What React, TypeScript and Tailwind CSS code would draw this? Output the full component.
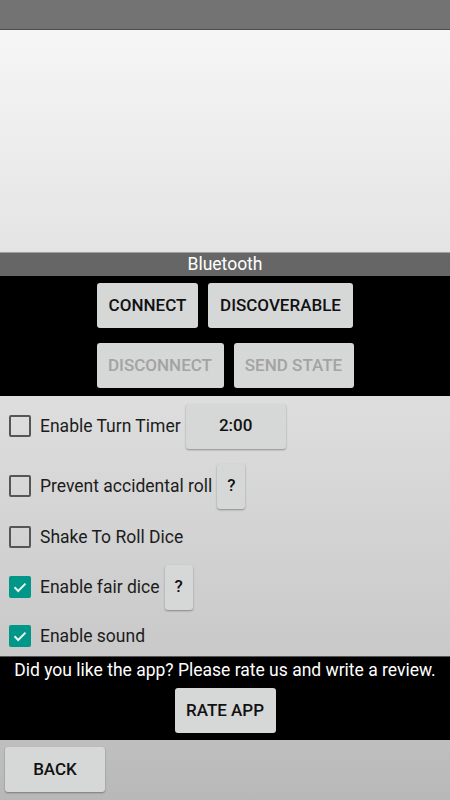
import React from "react";

type BtnProps = {
  label: string;
  w: string;
  disabled?: boolean;
};

function Btn({ label, w, disabled }: BtnProps) {
  return (
    <button
      className={`${w} h-[45px] shrink-0 rounded-[3px] bg-[#d6d7d7] shadow-[0_1px_2px_rgba(0,0,0,0.35)] text-[17px] font-medium ${
        disabled ? "text-[#a3a3a3]" : "text-[#111]"
      }`}
    >
      {label}
    </button>
  );
}

function Check({ checked }: { checked?: boolean }) {
  if (checked) {
    return (
      <div className="w-[22px] h-[22px] rounded-[2px] bg-[#009688] flex items-center justify-center shrink-0">
        <svg width="16" height="16" viewBox="0 0 16 16" fill="none">
          <path d="M2.5 8.3 L6.2 12 L13.5 4.6" stroke="#e8f5f3" strokeWidth="2" />
        </svg>
      </div>
    );
  }
  return <div className="w-[22px] h-[22px] rounded-[2px] border-2 border-[#555] shrink-0" />;
}

type RowProps = {
  h: string;
  label: string;
  checked?: boolean;
  children?: React.ReactNode;
};

function Row({ h, label, checked, children }: RowProps) {
  return (
    <div className={`${h} flex items-center pl-[9px]`}>
      <Check checked={checked} />
      <span className="ml-[9px] text-[17.5px] text-[#1c1c1c]">{label}</span>
      {children}
    </div>
  );
}

export default function App() {
  return (
    <div className="w-[450px] h-[800px] flex flex-col overflow-hidden font-['Roboto',sans-serif]">
      {/* status bar */}
      <div className="h-[30px] bg-[#737373] border-b border-[#4d4d4d] shrink-0" />

      {/* preview area */}
      <div className="h-[223px] bg-gradient-to-b from-[#f6f6f6] to-[#e4e4e4] border-b border-[#a0a0a0] shrink-0" />

      {/* bluetooth */}
      <div className="h-[23px] bg-[#666] text-white text-[17.5px] leading-[23px] text-center shrink-0">
        Bluetooth
      </div>
      <div className="h-[120px] bg-black flex flex-col items-center pt-[7px] gap-[15px] shrink-0">
        <div className="flex gap-[10px]">
          <Btn label="CONNECT" w="w-[101px]" />
          <Btn label="DISCOVERABLE" w="w-[145px]" />
        </div>
        <div className="flex gap-[10px]">
          <Btn label="DISCONNECT" w="w-[127px]" disabled />
          <Btn label="SEND STATE" w="w-[120px]" disabled />
        </div>
      </div>

      {/* options */}
      <div className="h-[260px] bg-gradient-to-b from-[#dedede] to-[#c9c9c9] flex flex-col shrink-0">
        <Row h="h-[60px]" label="Enable Turn Timer">
          <div className="ml-[5px]">
            <Btn label="2:00" w="w-[100px]" />
          </div>
        </Row>
        <Row h="h-[60px]" label="Prevent accidental roll">
          <div className="ml-[5px]">
            <Btn label="?" w="w-[28px]" />
          </div>
        </Row>
        <Row h="h-[42px]" label="Shake To Roll Dice" />
        <Row h="h-[58px]" label="Enable fair dice" checked>
          <div className="ml-[5px]">
            <Btn label="?" w="w-[28px]" />
          </div>
        </Row>
        <Row h="h-[40px]" label="Enable sound" checked />
      </div>

      {/* rate */}
      <div className="h-[84px] bg-black flex flex-col items-center shrink-0 border-t border-[#555]">
        <div className="text-white text-[17.5px] leading-[24px] mt-[1px] whitespace-nowrap">
          Did you like the app? Please rate us and write a review.
        </div>
        <div className="mt-[6px]">
          <Btn label="RATE APP" w="w-[101px]" />
        </div>
      </div>

      {/* back */}
      <div className="flex-1 bg-gradient-to-b from-[#bfbfbf] to-[#b8b8b8] pl-[5px] pt-[7px]">
        <Btn label="BACK" w="w-[100px]" />
      </div>
    </div>
  );
}
